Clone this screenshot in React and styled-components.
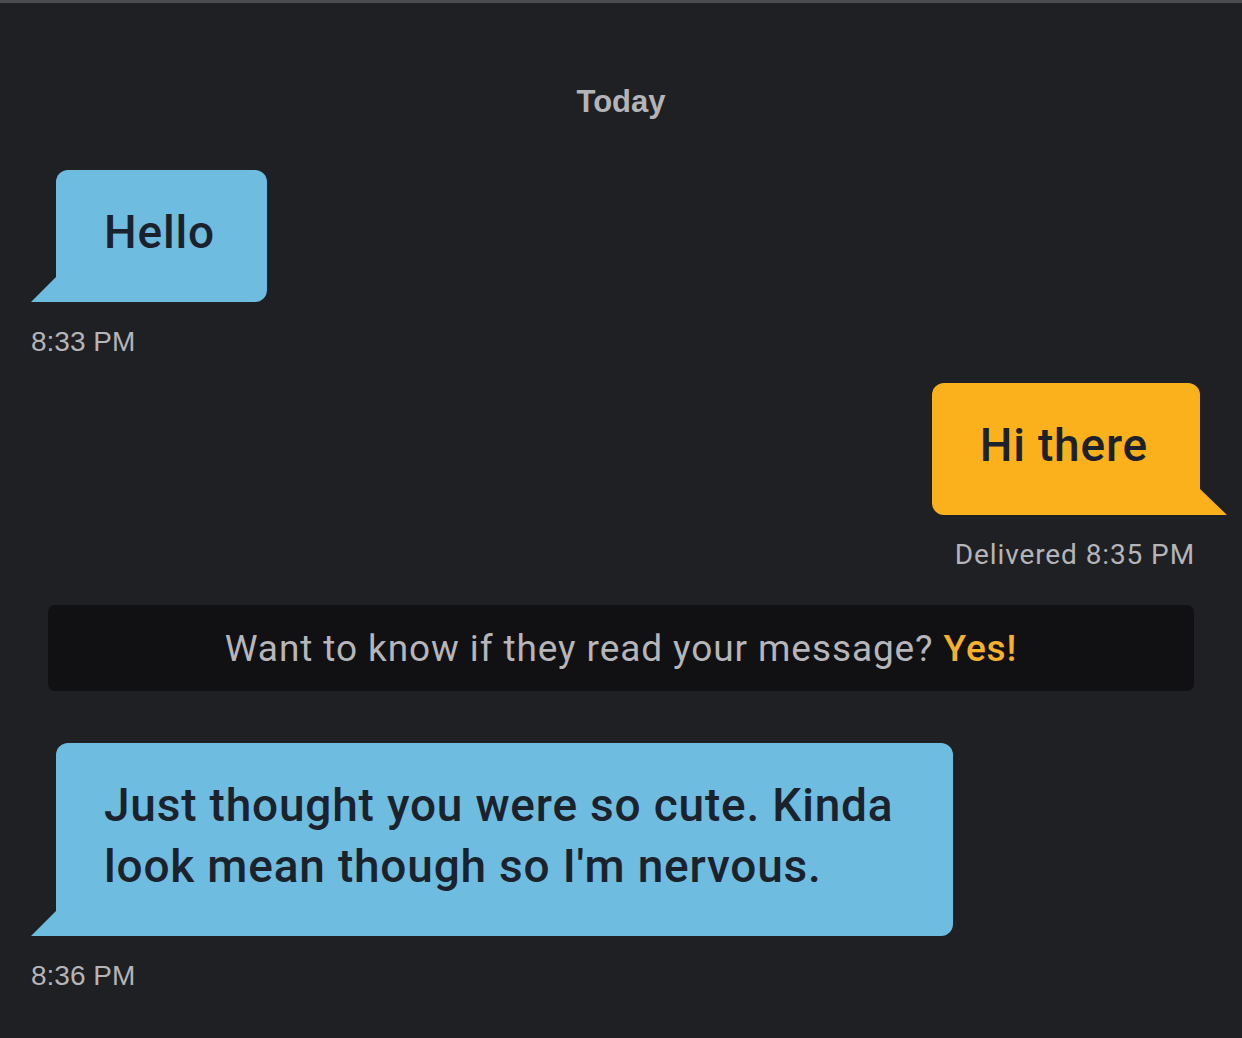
import React from "react";
import styled, { createGlobalStyle, css } from "styled-components";

const GlobalStyle = createGlobalStyle`
  html, body {
    margin: 0;
    padding: 0;
    background: #1f2023;
  }
  * {
    box-sizing: border-box;
  }
`;

const Page = styled.div`
  min-height: 100vh;
  background: #1f2023;
  border-top: 3px solid #4a4b4f;
  padding: 81px 31px 40px;
  display: flex;
  flex-direction: column;
  overflow: hidden;
`;

const DateLabel = styled.div`
  text-align: center;
  font-family: "Liberation Sans", Arial, sans-serif;
  font-weight: 700;
  font-size: 31px;
  line-height: 36px;
  color: #b3b3b8;
`;

const Group = styled.div`
  display: flex;
  flex-direction: column;
  align-items: ${({ $mine }) => ($mine ? "flex-end" : "flex-start")};
  margin-top: ${({ $gap }) => $gap}px;
`;

const Bubble = styled.div`
  position: relative;
  max-width: 897px;
  padding: 32px 52px 39px 48px;
  font-family: Roboto, "Liberation Sans", sans-serif;
  font-weight: 500;
  font-size: 46px;
  line-height: 61px;
  letter-spacing: 0.8px;
  color: #1c222c;
  border-radius: 12px;

  &::after {
    content: "";
    position: absolute;
    bottom: 0;
    width: 0;
    height: 0;
    border-style: solid;
  }

  ${({ $mine }) =>
    $mine
      ? css`
          background: #fbb11c;
          margin-right: 11px;
          border-bottom-right-radius: 0;
          &::after {
            right: -27px;
            border-width: 26px 0 0 27px;
            border-color: transparent transparent transparent #fbb11c;
          }
        `
      : css`
          background: #6ebcdf;
          margin-left: 25px;
          border-bottom-left-radius: 0;
          &::after {
            left: -25px;
            border-width: 25px 25px 0 0;
            border-color: transparent #6ebcdf transparent transparent;
          }
        `}
`;

const Meta = styled.div`
  margin-top: 23px;
  font-family: ${({ $din }) =>
    $din ? 'Roboto, "Liberation Sans", sans-serif' : '"Liberation Sans", Arial, sans-serif'};
  font-size: 28px;
  line-height: 34px;
  letter-spacing: ${({ $din }) => ($din ? "0.9px" : "0")};
  color: #b4b4b9;
  margin-right: ${({ $mine }) => ($mine ? "16px" : "0")};
`;

const Banner = styled.div`
  margin: 33px 17px 0;
  height: 86px;
  border-radius: 7px;
  background: #111113;
  display: flex;
  align-items: center;
  justify-content: center;
  font-family: Roboto, "Liberation Sans", sans-serif;
  font-size: 37px;
  letter-spacing: 0.9px;
  color: #b5b5ba;
`;

const Accent = styled.span`
  color: #f4b12c;
  font-weight: 500;
`;

const messages = [
  { id: 1, text: "Hello", time: "8:33 PM", gap: 50 },
  { id: 2, text: "Hi there", time: "Delivered 8:35 PM", mine: true, gap: 24 },
];

export default function App() {
  return (
    <>
      <GlobalStyle />
      <Page>
        <DateLabel>Today</DateLabel>
        {messages.map((m) => (
          <Group key={m.id} $mine={m.mine} $gap={m.gap}>
            <Bubble $mine={m.mine}>{m.text}</Bubble>
            <Meta $mine={m.mine} $din={m.mine}>
              {m.time}
            </Meta>
          </Group>
        ))}
        <Banner>
          Want to know if they read your message?&nbsp;<Accent>Yes!</Accent>
        </Banner>
        <Group $gap={52}>
          <Bubble>
            Just thought you were so cute. Kinda look mean though so I'm nervous.
          </Bubble>
          <Meta>8:36 PM</Meta>
        </Group>
      </Page>
    </>
  );
}
